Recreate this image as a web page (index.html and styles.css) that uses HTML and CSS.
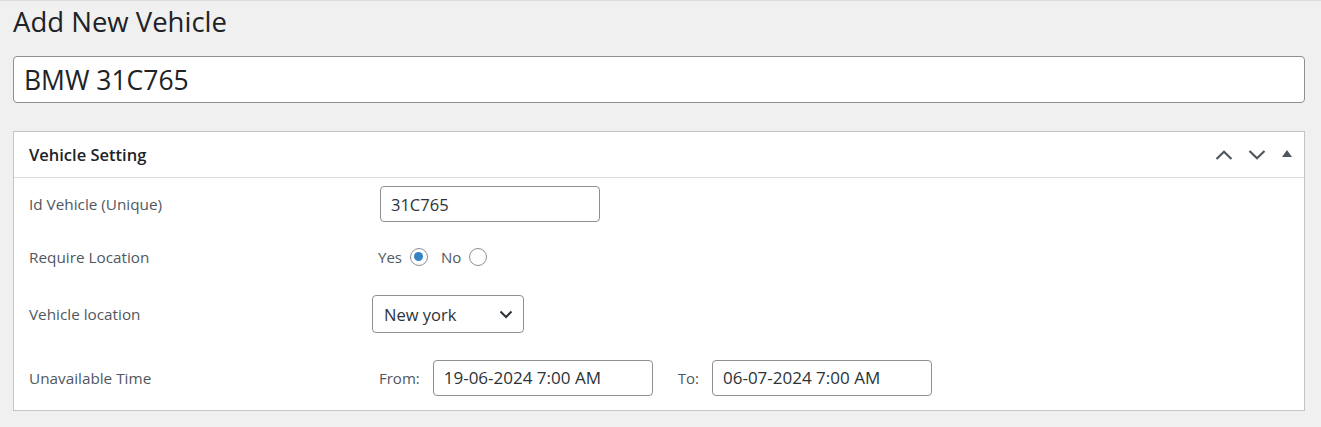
FILE: index.html
```html
<!DOCTYPE html>
<html lang="en">
<head>
<meta charset="utf-8">
<title>Add New Vehicle</title>
<link rel="stylesheet" href="styles.css">
</head>
<body>
<div class="wrap">
  <h1 class="page-title">Add New Vehicle</h1>
  <input class="title-input" type="text" value="BMW 31C765">
  <div class="postbox">
    <div class="postbox-header">
      <h2 class="postbox-title">Vehicle Setting</h2>
      <div class="handle-actions">
        <span class="handle-btn">
          <svg width="18" height="10" viewBox="0 0 18 10"><path d="M1.5 9 L9 1.8 L16.5 9" fill="none" stroke="#50575e" stroke-width="2.2"/></svg>
        </span>
        <span class="handle-btn">
          <svg width="18" height="10" viewBox="0 0 18 10"><path d="M1.5 1 L9 8.2 L16.5 1" fill="none" stroke="#50575e" stroke-width="2.2"/></svg>
        </span>
        <span class="handle-btn toggle">
          <svg width="10" height="7" viewBox="0 0 10 7"><path d="M5 0 L10 7 L0 7 Z" fill="#50575e"/></svg>
        </span>
      </div>
    </div>
    <div class="postbox-body">
      <div class="row row-id">
        <div class="label">Id Vehicle (Unique)</div>
        <div class="value"><input class="field field-id" type="text" value="31C765"></div>
      </div>
      <div class="row row-req">
        <div class="label">Require Location</div>
        <div class="value radios">
          <label class="radio-item">Yes <input type="radio" name="req" checked></label>
          <label class="radio-item">No <input type="radio" name="req"></label>
        </div>
      </div>
      <div class="row row-loc">
        <div class="label">Vehicle location</div>
        <div class="value">
          <div class="select">
            <span>New york</span>
            <svg width="14" height="9" viewBox="0 0 14 9"><path d="M1.5 1.5 L7 7 L12.5 1.5" fill="none" stroke="#2c3338" stroke-width="2"/></svg>
          </div>
        </div>
      </div>
      <div class="row row-time">
        <div class="label">Unavailable Time</div>
        <div class="value times">
          <span class="sub-label">From:</span>
          <input class="field field-date" type="text" value="19-06-2024 7:00 AM">
          <span class="sub-label to">To:</span>
          <input class="field field-date" type="text" value="06-07-2024 7:00 AM">
        </div>
      </div>
    </div>
  </div>
</div>
</body>
</html>
```
FILE: styles.css
```css
html, body {
  margin: 0;
  padding: 0;
}
body {
  background: #f0f0f1;
  font-family: "Open Sans", "Noto Sans", sans-serif;
  color: #1d2327;
  border-top: 1px solid #dcdcde;
}
.wrap {
  padding: 0 16px 0 13px;
}
.page-title {
  margin: 0;
  padding: 3px 0 0;
  font-size: 27.5px;
  font-weight: 400;
  line-height: 36px;
  color: #1d2327;
}
.title-input {
  display: block;
  box-sizing: border-box;
  width: 100%;
  height: 47px;
  margin-top: 16px;
  padding: 0 10px;
  border: 1px solid #8c8f94;
  border-radius: 4px;
  background: #fff;
  font-family: inherit;
  font-size: 26.5px;
  color: #1d2327;
  outline: none;
}
.postbox {
  margin-top: 28px;
  background: #fff;
  border: 1px solid #c3c4c7;
  box-shadow: 0 1px 1px rgba(0,0,0,.04);
}
.postbox-header {
  display: flex;
  align-items: center;
  justify-content: space-between;
  height: 45px;
  border-bottom: 1px solid #dcdcde;
  padding-left: 15px;
}
.postbox-title {
  margin: 0;
  font-size: 16.5px;
  font-weight: 600;
  color: #1d2327;
}
.handle-actions {
  display: flex;
  align-items: center;
  padding-right: 3px;
}
.handle-btn {
  display: flex;
  align-items: center;
  justify-content: center;
  width: 33px;
  height: 36px;
}
.handle-btn.toggle {
  width: 28px;
  padding-bottom: 2px;
}
.postbox-body {
  padding: 0 15px;
}
.row {
  display: grid;
  grid-template-columns: 343px 1fr;
  align-items: center;
}
.row-id { height: 52px; }
.row-req { height: 53px; }
.row-loc { height: 62px; }
.row-time { height: 65px; }
.label {
  font-size: 15.3px;
  color: #50575e;
}
.field {
  box-sizing: border-box;
  height: 36px;
  width: 220px;
  padding: 0 10px;
  border: 1px solid #8c8f94;
  border-radius: 4px;
  background: #fff;
  font-family: inherit;
  color: #2c3338;
  outline: none;
}
.field-id {
  margin-left: 8px;
  font-size: 16.5px;
}
.radios {
  display: flex;
  align-items: center;
  padding-left: 6px;
  gap: 13px;
}
.radio-item {
  display: flex;
  align-items: center;
  gap: 8px;
  font-size: 15px;
  color: #50575e;
}
.radio-item input {
  appearance: none;
  -webkit-appearance: none;
  margin: 0;
  width: 18px;
  height: 18px;
  border: 1px solid #8c8f94;
  border-radius: 50%;
  background: #fff;
  display: inline-grid;
  place-content: center;
}
.radio-item input:checked::before {
  content: "";
  width: 9px;
  height: 9px;
  border-radius: 50%;
  background: #3582c4;
}
.select {
  box-sizing: border-box;
  display: flex;
  align-items: center;
  justify-content: space-between;
  width: 152px;
  height: 38px;
  padding: 0 10px 0 11px;
  border: 1px solid #8c8f94;
  border-radius: 4px;
  font-size: 16.5px;
  color: #2c3338;
}
.times {
  display: flex;
  align-items: center;
  padding-left: 7px;
}
.sub-label {
  font-size: 15px;
  color: #50575e;
  margin-right: 13px;
}
.sub-label.to {
  margin-left: 25px;
  margin-right: 13px;
}
.field-date {
  font-size: 17px;
}
```
